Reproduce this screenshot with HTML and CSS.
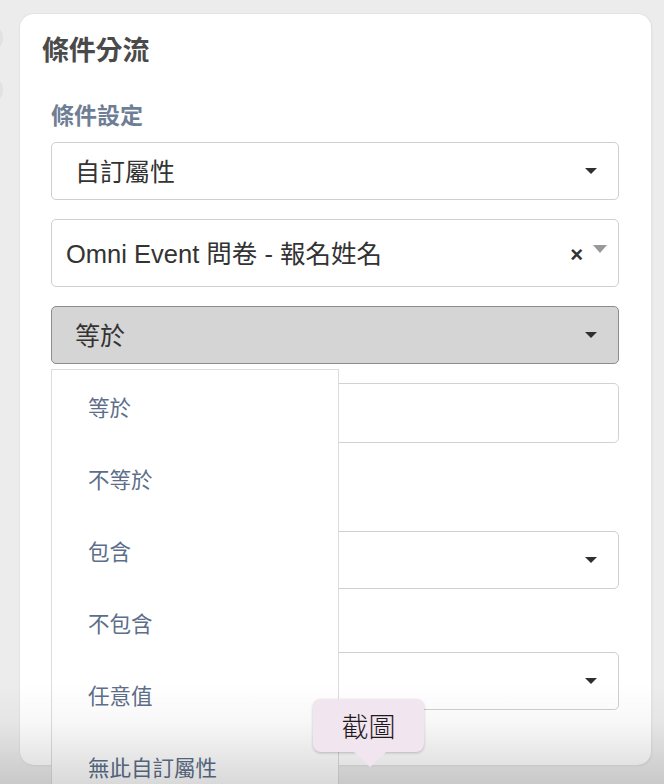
FILE: index.html
```html
<!DOCTYPE html>
<html lang="zh-Hant">
<head>
<meta charset="utf-8">
<link rel="stylesheet" href="styles.css">
</head>
<body>
<div class="side side-a"></div>
<div class="side side-b"></div>
<div class="card">
  <h2 class="title">條件分流</h2>
  <div class="section">
    <div class="label">條件設定</div>
    <div class="select select-first">
      <span class="select-text">自訂屬性</span>
      <span class="caret"></span>
    </div>
    <div class="select select-tall">
      <span class="select-text">Omni Event 問卷 - 報名姓名</span>
      <span class="clear">×</span>
      <span class="caret caret-light"></span>
    </div>
    <div class="select select-active">
      <span class="select-text">等於</span>
      <span class="caret"></span>
    </div>
    <div class="input"></div>
    <div class="select select-gap1">
      <span class="select-text"></span>
      <span class="caret"></span>
    </div>
    <div class="select select-gap2">
      <span class="select-text"></span>
      <span class="caret"></span>
    </div>
  </div>
  <ul class="menu">
    <li>等於</li>
    <li>不等於</li>
    <li>包含</li>
    <li>不包含</li>
    <li>任意值</li>
    <li>無此自訂屬性</li>
  </ul>
</div>
<div class="fade"></div>
<div class="tooltip">截圖</div>
</body>
</html>
```
FILE: styles.css
```css
html, body {
  margin: 0;
  padding: 0;
}
body {
  background: #ececec;
  width: 664px;
  height: 784px;
  overflow: hidden;
  position: relative;
  font-family: "Liberation Sans", "Noto Sans CJK TC", sans-serif;
}
.side {
  position: absolute;
  left: -14px;
  width: 17px;
  height: 20px;
  border-radius: 8px;
  background: #e2e2e2;
}
.side-a { top: 28px; }
.side-b { top: 80px; }
.card {
  position: relative;
  margin: 14px 0 0 20px;
  width: 631px;
  height: 751px;
  box-sizing: border-box;
  background: #fff;
  border-radius: 14px;
  box-shadow: 0 0 0 1px #e3e3e3, 1px 1px 2px rgba(0,0,0,0.08);
  padding-top: 24px;
}
.title {
  margin: 0 0 0 22px;
  font-size: 27px;
  line-height: 27px;
  font-weight: 700;
  color: #4a4a4a;
  letter-spacing: -0.2px;
}
.section {
  padding: 0 32px 0 31px;
  display: flex;
  flex-direction: column;
}
.label {
  margin-top: 40px;
  font-size: 23px;
  line-height: 23px;
  font-weight: 700;
  color: #6e7e95;
}
.select {
  margin-top: 19px;
  height: 58px;
  box-sizing: border-box;
  border: 1px solid #cfcfcf;
  border-radius: 5px;
  display: flex;
  align-items: center;
  padding: 0 21px 3px 23px;
  color: #333;
  font-size: 25px;
}
.select .caret {
  margin-top: 3px;
}
.select-first {
  margin-top: 14px;
}
.select-text {
  flex: 1;
  white-space: nowrap;
}
.select-tall {
  margin-top: 19px;
  height: 68px;
  padding: 0 11px 4px 14px;
  font-size: 25.5px;
}
.select-active {
  background: #d5d5d5;
  border-color: #8c8c8c;
}
.select-gap1 { margin-top: 88px; }
.select-gap2 { margin-top: 63px; }
.caret {
  width: 0;
  height: 0;
  border-left: 6.5px solid transparent;
  border-right: 6.5px solid transparent;
  border-top: 6px solid #2f2f2f;
}
.select .caret-light {
  border-left-width: 7px;
  border-right-width: 7px;
  border-top: 8px solid #999;
  margin-top: -4px;
}
.clear {
  font-family: "Liberation Sans", sans-serif;
  font-weight: 700;
  font-size: 22px;
  color: #333;
  margin-right: 10px;
  margin-top: 8px;
}
.input {
  margin-top: 19px;
  height: 60px;
  box-sizing: border-box;
  border: 1px solid #d2d2d2;
  border-radius: 5px;
}
.menu {
  position: absolute;
  left: 31px;
  top: 355px;
  width: 288px;
  height: 440px;
  margin: 0;
  padding: 0;
  box-sizing: border-box;
  list-style: none;
  background: #fff;
  border: 1px solid #dcdcdc;
}
.menu li {
  height: 72px;
  display: flex;
  align-items: center;
  padding-left: 36px;
  font-size: 21.5px;
  color: #5c6e8a;
  font-family: "Noto Sans CJK TC", sans-serif;
}
.fade {
  position: absolute;
  left: 0;
  right: 0;
  bottom: 0;
  height: 100px;
  background: linear-gradient(to bottom, rgba(0,0,0,0) 0%, rgba(0,0,0,0.03) 40%, rgba(0,0,0,0.15) 100%);
  pointer-events: none;
}
.tooltip {
  position: absolute;
  left: 313px;
  top: 699px;
  width: 111px;
  height: 53px;
  box-sizing: border-box;
  background: #f1e5ef;
  border-radius: 8px;
  box-shadow: 0 1px 3px rgba(0,0,0,0.22);
  display: flex;
  align-items: center;
  justify-content: center;
  font-family: "Noto Sans CJK TC", sans-serif;
  font-weight: 300;
  font-size: 27px;
  color: #1e1a1e;
}
.tooltip::after {
  content: "";
  position: absolute;
  left: 41px;
  top: 53px;
  width: 0;
  height: 0;
  border-left: 16px solid transparent;
  border-right: 16px solid transparent;
  border-top: 15px solid #f1e5ef;
}
```
